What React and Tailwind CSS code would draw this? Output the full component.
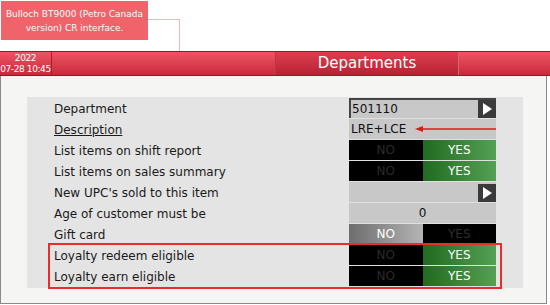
import React from "react";

const font = { fontFamily: "Tahoma, 'DejaVu Sans', sans-serif" };

function Arrow() {
  return (
    <div className="w-[18px] h-[18px] bg-[#3a3a3a] flex items-center justify-center">
      <svg width="10" height="12" viewBox="0 0 10 12">
        <path d="M1 0 L10 6 L1 12 Z" fill="#ffffff" />
      </svg>
    </div>
  );
}

function Toggle({ gift }) {
  if (gift) {
    return (
      <div className="flex h-[20px] w-full text-[12px]">
        <div className="flex-1 flex items-center justify-center text-white bg-gradient-to-r from-[#6e6e6e] to-[#b4b4b4]">NO</div>
        <div className="flex-1 flex items-center justify-center text-[#2e2e2e] bg-black">YES</div>
      </div>
    );
  }
  return (
    <div className="flex h-[20px] w-full text-[12px]">
      <div className="flex-1 flex items-center justify-center text-[#2a2a2a] bg-black">NO</div>
      <div className="flex-1 flex items-center justify-center text-white bg-gradient-to-r from-[#1f6b1f] to-[#54a054]">YES</div>
    </div>
  );
}

const rows = [
  { label: "Department", kind: "dept" },
  { label: "Description", kind: "desc", underline: true },
  { label: "List items on shift report", kind: "toggle" },
  { label: "List items on sales summary", kind: "toggle" },
  { label: "New UPC's sold to this item", kind: "upc" },
  { label: "Age of customer must be", kind: "age" },
  { label: "Gift card", kind: "gift" },
  { label: "Loyalty redeem eligible", kind: "toggle" },
  { label: "Loyalty earn eligible", kind: "toggle" },
];

function Control({ kind }) {
  if (kind === "dept") {
    return (
      <div className="flex h-[20px] bg-[#c8c8c8] border-t-2 border-l-2 border-[#444]">
        <div className="flex-1 text-[12px] text-[#111] pl-[1px] leading-[18px]">501110</div>
        <Arrow />
      </div>
    );
  }
  if (kind === "desc") {
    return (
      <div className="relative flex items-center h-[20px] bg-[#c8c8c8] text-[12px] text-[#111] pl-[2px]">
        LRE+LCE
        <svg className="absolute left-[66px] top-[6px]" width="82" height="8" viewBox="0 0 82 8">
          <path d="M7 4 L81 4" stroke="#e01818" strokeWidth="1.5" />
          <path d="M0 4 L8 1 L8 7 Z" fill="#e01818" />
        </svg>
      </div>
    );
  }
  if (kind === "upc") {
    return (
      <div className="flex justify-end items-end h-[20px] bg-[#c8c8c8]">
        <Arrow />
      </div>
    );
  }
  if (kind === "age") {
    return (
      <div className="flex items-center justify-center h-[20px] bg-[#c8c8c8] text-[12px] text-[#111]">0</div>
    );
  }
  if (kind === "gift") return <Toggle gift />;
  return <Toggle />;
}

export default function App() {
  return (
    <div className="relative w-[550px] h-[305px] bg-white overflow-hidden" style={font}>
      {/* annotation */}
      <div className="h-[51px] pt-[1px] pl-[1px]">
        <div className="w-[147px] h-[39px] bg-[#f0636b] text-white text-[9px] leading-[14px] flex flex-col items-center justify-center text-center whitespace-nowrap">
          <div>Bulloch BT9000 (Petro Canada</div>
          <div>version) CR interface.</div>
        </div>
      </div>
      <div className="absolute left-[148px] top-[19px] w-[32px] h-[32px] border-t border-r border-[#f6b4b8]" />

      {/* header */}
      <div className="flex h-[25px] border-t border-b border-[#8e1c26]">
        <div className="w-[52px] flex flex-col items-center justify-center text-white text-[9px] leading-[11px] tracking-[-0.4px] whitespace-nowrap bg-gradient-to-b from-[#ee5466] to-[#c8283a] border-r border-[#a82030]">
          <div>2022</div>
          <div>07-28 10:45</div>
        </div>
        <div className="w-[224px] bg-gradient-to-b from-[#ee5466] to-[#c8283a] border-r border-[#b83846]" />
        <div className="w-[183px] flex items-center justify-center text-white text-[15px] bg-gradient-to-b from-[#dc3e50] to-[#b82232] border-r border-[#d86470]">
          Departments
        </div>
        <div className="flex-1 bg-gradient-to-b from-[#ee5466] to-[#c8283a]" />
      </div>

      {/* body */}
      <div className="h-[228px] w-[547px] bg-[#f5f5f3] border-l border-r border-b border-[#8a8a8a] pt-[21px]">
        <div className="relative ml-[26px] w-[496px] h-[191px] bg-[#e4e4e4] pt-[1px]">
          {rows.map((r) => (
            <div key={r.label} className="flex items-center h-[21px]">
              <div className={`w-[322px] pl-[27px] text-[12px] text-[#1a1a1a] whitespace-nowrap ${r.underline ? "underline" : ""}`}>
                {r.label}
              </div>
              <div className="w-[147px] h-[21px] border-b border-[#e0e0e0]">
                <Control kind={r.kind} />
              </div>
            </div>
          ))}
          <div className="absolute left-[21px] top-[146px] w-[454px] h-[46px] border-2 border-[#ee2a2a]" />
        </div>
      </div>
    </div>
  );
}
